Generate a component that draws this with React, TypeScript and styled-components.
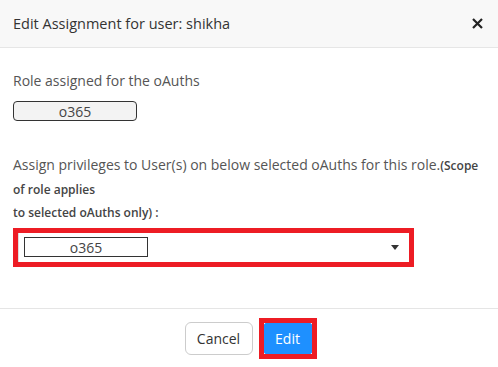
import { styled, createGlobalStyle } from 'styled-components';

const GlobalStyle = createGlobalStyle`
  body {
    margin: 0;
    background: #fff;
    font-family: 'Open Sans', 'Noto Sans', sans-serif;
  }
`;

const Modal = styled.div`
  width: 498px;
  height: 367px;
  display: flex;
  flex-direction: column;
  background: #fff;
  color: #555;
`;

const Header = styled.header`
  height: 48px;
  box-sizing: border-box;
  display: flex;
  align-items: center;
  justify-content: space-between;
  padding: 0 14px 1px 13px;
  background: #f8f8f8;
  border-bottom: 1px solid #e6e6e6;
`;

const Title = styled.h4`
  margin: 0;
  font-size: 14.5px;
  font-weight: 400;
  color: #333;
`;

const CloseButton = styled.button`
  border: 0;
  padding: 0;
  background: none;
  width: 14px;
  height: 14px;
  display: flex;
  align-items: center;
  justify-content: center;
`;

const Body = styled.section`
  flex: 1;
  padding: 23px 13px 0;
  font-size: 14px;
`;

const Label = styled.div<{ $lineHeight?: number; $gap?: number }>`
  line-height: ${(p) => p.$lineHeight ?? 20}px;
  margin-top: ${(p) => p.$gap ?? 0}px;
  color: #555;
`;

const Note = styled.span`
  font-size: 12px;
  font-weight: 600;
  color: #444;
`;

const Pill = styled.div`
  margin-top: 10px;
  width: 124px;
  height: 20px;
  box-sizing: border-box;
  border: 1px solid #333;
  border-radius: 4px;
  background: #f3f3f3;
  display: flex;
  align-items: center;
  justify-content: center;
  color: #444;
  font-size: 14px;
`;

const Highlight = styled.div<{ $width: number; $height: number; $gap?: number }>`
  width: ${(p) => p.$width}px;
  height: ${(p) => p.$height}px;
  margin-top: ${(p) => p.$gap ?? 0}px;
  box-sizing: border-box;
  border: 5px solid #ed1c24;
`;

const SelectBox = styled.div`
  display: flex;
  align-items: center;
  justify-content: space-between;
  padding: 0 10px 0 5px;
  border-left: 1px solid #ddd;
  height: 100%;
  box-sizing: border-box;
`;

const Chip = styled.div`
  width: 124px;
  height: 20px;
  box-sizing: border-box;
  border: 1px solid #333;
  display: flex;
  align-items: center;
  justify-content: center;
  color: #444;
  font-size: 14px;
`;

const Footer = styled.footer`
  height: 59px;
  box-sizing: border-box;
  border-top: 1px solid #e5e5e5;
  display: flex;
  align-items: center;
  justify-content: center;
  gap: 6px;
  padding-left: 3px;
`;

const Button = styled.button<{ $primary?: boolean }>`
  font-family: inherit;
  font-size: 14px;
  cursor: pointer;
  border-radius: ${(p) => (p.$primary ? '2px' : '6px')};
  border: 1px solid ${(p) => (p.$primary ? '#1e90ff' : '#ccc')};
  background: ${(p) => (p.$primary ? '#1e90ff' : '#fff')};
  color: ${(p) => (p.$primary ? '#fff' : '#333')};
  height: ${(p) => (p.$primary ? '31px' : '33px')};
  width: ${(p) => (p.$primary ? '48px' : '68px')};
  padding: 0;
  margin: 0;
`;

const App = () => {
  return (
    <>
      <GlobalStyle />
      <Modal>
        <Header>
          <Title>Edit Assignment for user: shikha</Title>
          <CloseButton aria-label="close">
            <svg width="11" height="11" viewBox="0 0 11 11">
              <path d="M1 1 L10 10 M10 1 L1 10" stroke="#222" strokeWidth="2.2" />
            </svg>
          </CloseButton>
        </Header>
        <Body>
          <Label>Role assigned for the oAuths</Label>
          <Pill>o365</Pill>
          <Label $lineHeight={22.5} $gap={33}>
            Assign privileges to User(s) on below selected oAuths for this role.
            <Note>
              (Scope
              <br />
              of role applies
              <br />
              to selected oAuths only) :
            </Note>
          </Label>
          <Highlight $width={401} $height={39} $gap={3}>
            <SelectBox>
              <Chip>o365</Chip>
              <svg width="8" height="5" viewBox="0 0 8 5">
                <path d="M0 0 L8 0 L4 5 Z" fill="#333" />
              </svg>
            </SelectBox>
          </Highlight>
        </Body>
        <Footer>
          <Button>Cancel</Button>
          <Highlight $width={58} $height={41}>
            <Button $primary>Edit</Button>
          </Highlight>
        </Footer>
      </Modal>
    </>
  );
};

export default App;
